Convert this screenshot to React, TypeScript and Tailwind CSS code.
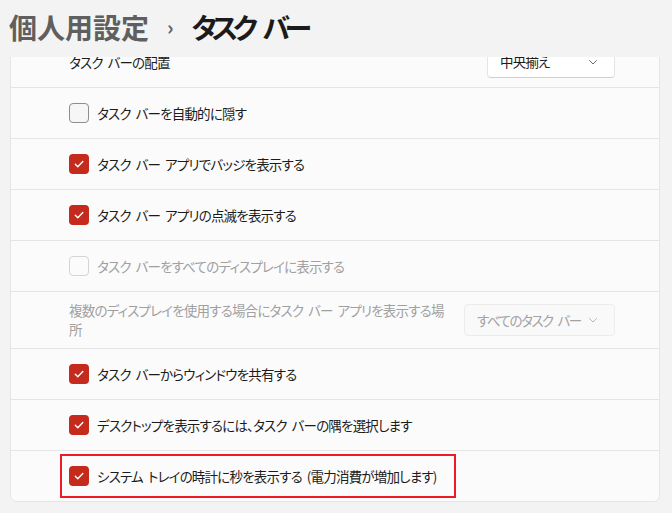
import React from 'react'

const FONT = "[font-family:'Noto_Sans_CJK_JP','Noto_Sans',sans-serif] [font-feature-settings:'palt']"
const BODY = 'text-[13.5px] tracking-[-0.06em]'

/* spaces collapse under negative tracking, so give them a fixed width */
function Txt({ children, gap = 'w-[5px]' }: { children: string; gap?: string }) {
  const parts = children.split(' ')
  return (
    <>
      {parts.map((p, i) => (
        <React.Fragment key={i}>
          {i > 0 && <span className={`inline-block ${gap}`} />}
          {p}
        </React.Fragment>
      ))}
    </>
  )
}

/* ─── Checkbox ─────────────────────────────────────────────── */
function Check({ checked, disabled }: { checked?: boolean; disabled?: boolean }) {
  if (checked) {
    return (
      <span className="grid h-5 w-5 shrink-0 place-items-center rounded-[4px] bg-[#c42b1c]">
        <svg width="12" height="12" viewBox="0 0 12 12" fill="none" stroke="#fff" strokeWidth="1.4" strokeLinecap="round" strokeLinejoin="round">
          <path d="M2.3 6.3l2.5 2.4 5-5.2" />
        </svg>
      </span>
    )
  }
  return (
    <span
      className={`h-5 w-5 shrink-0 rounded-[4px] border ${
        disabled ? 'border-[#d4d4d4] bg-[#fbfbfb]' : 'border-[#8d8d8d] bg-[#f6f6f6]'
      }`}
    />
  )
}

function Chevron({ muted }: { muted?: boolean }) {
  return (
    <svg width="10" height="10" viewBox="0 0 10 10" fill="none" stroke={muted ? '#b5b5b5' : '#6b6b6b'} strokeWidth="1" strokeLinecap="round">
      <path d="M1.5 3.5L5 7l3.5-3.5" />
    </svg>
  )
}

function Select({ label, disabled, className }: { label: string; disabled?: boolean; className: string }) {
  return (
    <div
      className={`flex h-8 items-center justify-between rounded-[4px] border pl-3 pr-[16px] text-[13.5px] ${className} ${
        disabled
          ? 'border-[#ececec] bg-[#f9f9f9] text-[#a2a2a2] tracking-[-0.11em]'
          : 'border-[#e5e5e5] border-b-[#d0d0d0] bg-white text-[#1b1b1b] tracking-[-0.06em]'
      }`}
    >
      <span className="whitespace-nowrap">
        <Txt>{label}</Txt>
      </span>
      <Chevron muted={disabled} />
    </div>
  )
}

function CheckRow({ label, checked, disabled }: { label: string; checked?: boolean; disabled?: boolean }) {
  return (
    <div className="flex h-[51px] items-center gap-2 border-t border-[#e5e5e5] pl-[58px]">
      <Check checked={checked} disabled={disabled} />
      <span className={`${BODY} leading-5 whitespace-nowrap ${disabled ? 'text-[#a0a0a0]' : 'text-[#1b1b1b]'}`}>
        <Txt>{label}</Txt>
      </span>
    </div>
  )
}

export default function App() {
  return (
    <div className={`flex h-[513px] w-[672px] flex-col overflow-hidden bg-[#f3f3f3] ${FONT}`}>
      {/* Header */}
      <div className="flex h-[57px] shrink-0 items-center pb-[4px] pl-[9px] text-[28px] font-semibold leading-none">
        <span className="text-[#5f5f5f]">個人用設定</span>
        <span className="mx-[18px] text-[20px] text-[#5f5f5f]">›</span>
        <span className="tracking-[-0.19em] text-[#1b1b1b]">
          <Txt gap="w-[10px]">タスク バー</Txt>
        </span>
      </div>

      {/* Panel */}
      <div className="ml-[10px] mr-[12px] overflow-hidden">
        <div className="-mt-[22px] rounded-b-[6px] border border-[#e5e5e5] bg-[#fbfbfb]">
          <div className="flex h-[51px] items-center justify-between pl-[58px] pr-[44px]">
            <span className={`${BODY} leading-5 text-[#1b1b1b]`}>
              <Txt>タスク バーの配置</Txt>
            </span>
            <Select label="中央揃え" className="w-[128px]" />
          </div>

          <CheckRow label="タスク バーを自動的に隠す" />
          <CheckRow label="タスク バー アプリでバッジを表示する" checked />
          <CheckRow label="タスク バー アプリの点滅を表示する" checked />
          <CheckRow label="タスク バーをすべてのディスプレイに表示する" disabled />

          <div className="flex h-[57px] items-center justify-between border-t border-[#e5e5e5] pl-[58px] pr-[44px]">
            <span className={`w-[386px] ${BODY} leading-[19px] text-[#a0a0a0]`}>
              <Txt>複数のディスプレイを使用する場合にタスク バー アプリを表示する場</Txt>
              <br />
              所
            </span>
            <Select label="すべてのタスク バー" disabled className="w-[151px]" />
          </div>

          <CheckRow label="タスク バーからウィンドウを共有する" checked />
          <CheckRow label="デスクトップを表示するには、タスク バーの隅を選択します" checked />

          <div className="flex h-[51px] items-center border-t border-[#e5e5e5] pl-[49px]">
            <div className="flex h-[44px] w-[396px] items-center gap-2 border-2 border-[#ed1c24] pl-[7px]">
              <Check checked />
              <span className={`${BODY} leading-5 whitespace-nowrap text-[#1b1b1b]`}>
                <Txt>システム トレイの時計に秒を表示する (電力消費が増加します)</Txt>
              </span>
            </div>
          </div>
        </div>
      </div>
    </div>
  )
}
